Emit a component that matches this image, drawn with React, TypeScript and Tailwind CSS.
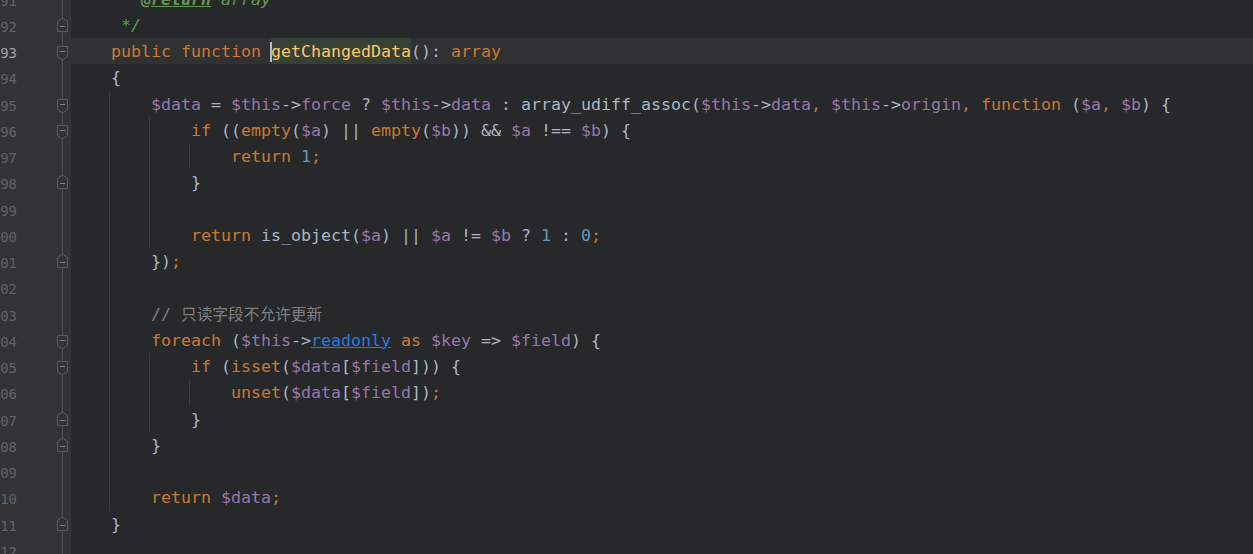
import React from "react";

const K = "text-[#cc7832]";
const V = "text-[#9876aa]";
const P = "text-[#a9b7c6]";
const N = "text-[#6897bb]";
const C = "text-[#808080]";
const D = "text-[#629755] italic";
const DT = "text-[#629755] italic font-bold underline decoration-[#629755]";
const L = "text-[#287bde] underline decoration-[#287bde]";
const CJK = "text-[#808080] text-[15.7px]";

type Tok = [string, string];
type Line = {
  n: number;
  toks: Tok[];
  guides?: number[];
  fold?: "s" | "e";
  current?: boolean;
};

const lines: Line[] = [
  { n: 91, toks: [[D, "     * "], [DT, "@return"], [D, " array"]] },
  { n: 92, toks: [[D, "     */"]], fold: "e" },
  {
    n: 93,
    current: true,
    fold: "s",
    toks: [[K, "    public function "], ["HL", "getChangedData"], [P, "(): "], [K, "array"]],
  },
  { n: 94, toks: [[P, "    {"]] },
  {
    n: 95,
    fold: "s",
    guides: [38],
    toks: [
      [P, "        "], [V, "$data"], [P, " = "], [V, "$this"], [P, "->"], [V, "force"], [P, " ? "],
      [V, "$this"], [P, "->"], [V, "data"], [P, " : array_udiff_assoc("], [V, "$this"], [P, "->"],
      [V, "data"], [K, ","], [P, " "], [V, "$this"], [P, "->"], [V, "origin"], [K, ","], [P, " "],
      [K, "function"], [P, " ("], [V, "$a"], [K, ","], [P, " "], [V, "$b"], [P, ") {"],
    ],
  },
  {
    n: 96,
    fold: "s",
    guides: [38, 78],
    toks: [
      [P, "            "], [K, "if"], [P, " (("], [K, "empty"], [P, "("], [V, "$a"], [P, ") || "],
      [K, "empty"], [P, "("], [V, "$b"], [P, ")) && "], [V, "$a"], [P, " !== "], [V, "$b"], [P, ") {"],
    ],
  },
  { n: 97, guides: [38, 78, 118], toks: [[P, "                "], [K, "return"], [P, " "], [N, "1"], [K, ";"]] },
  { n: 98, fold: "e", guides: [38, 78], toks: [[P, "            }"]] },
  { n: 99, guides: [38, 78], toks: [] },
  {
    n: 100,
    guides: [38, 78],
    toks: [
      [P, "            "], [K, "return"], [P, " is_object("], [V, "$a"], [P, ") || "], [V, "$a"],
      [P, " != "], [V, "$b"], [P, " ? "], [N, "1"], [P, " : "], [N, "0"], [K, ";"],
    ],
  },
  { n: 101, fold: "e", guides: [38], toks: [[P, "        })"], [K, ";"]] },
  { n: 102, guides: [38], toks: [] },
  { n: 103, guides: [38], toks: [[C, "        // "], [CJK, "只读字段不允许更新"]] },
  {
    n: 104,
    fold: "s",
    guides: [38],
    toks: [
      [P, "        "], [K, "foreach"], [P, " ("], [V, "$this"], [P, "->"], [L, "readonly"], [P, " "],
      [K, "as"], [P, " "], [V, "$key"], [P, " => "], [V, "$field"], [P, ") {"],
    ],
  },
  {
    n: 105,
    fold: "s",
    guides: [38, 78],
    toks: [
      [P, "            "], [K, "if"], [P, " ("], [K, "isset"], [P, "("], [V, "$data"], [P, "["],
      [V, "$field"], [P, "])) {"],
    ],
  },
  {
    n: 106,
    guides: [38, 78, 118],
    toks: [
      [P, "                "], [K, "unset"], [P, "("], [V, "$data"], [P, "["], [V, "$field"], [P, "])"], [K, ";"],
    ],
  },
  { n: 107, fold: "e", guides: [38, 78], toks: [[P, "            }"]] },
  { n: 108, fold: "e", guides: [38], toks: [[P, "        }"]] },
  { n: 109, guides: [38], toks: [] },
  { n: 110, guides: [38], toks: [[P, "        "], [K, "return"], [P, " "], [V, "$data"], [K, ";"]] },
  { n: 111, fold: "e", toks: [[P, "    }"]] },
  { n: 112, toks: [] },
];

function FoldStart() {
  return (
    <svg className="absolute left-[56px] top-[8px]" width="13" height="15" viewBox="0 0 13 15">
      <path d="M1.5 0.5 H11.5 V10.5 L6.5 14 L1.5 10.5 Z" fill="#313335" stroke="#595c5f" strokeWidth="1" />
      <path d="M4 5.5 H9" stroke="#7f8285" strokeWidth="1" />
    </svg>
  );
}

function FoldEnd() {
  return (
    <svg className="absolute left-[56px] top-[5px]" width="13" height="15" viewBox="0 0 13 15">
      <path d="M1.5 14.5 H11.5 V4.5 L6.5 1 L1.5 4.5 Z" fill="#313335" stroke="#595c5f" strokeWidth="1" />
      <path d="M4 9.5 H9" stroke="#7f8285" strokeWidth="1" />
    </svg>
  );
}

function Row({ line }: { line: Line }) {
  return (
    <div className="flex h-[26.25px] shrink-0">
      <div className="relative w-[71px] shrink-0 bg-[#313335]">
        <div
          className={`flex w-[17px] justify-end pt-[2px] text-[14px] leading-[26.25px] ${
            line.current ? "text-[#a4a3a3]" : "text-[#606366]"
          }`}
        >
          <span>{line.n}</span>
        </div>
        <div className="absolute left-[62px] top-0 h-full w-px bg-[#4c4f52]" />
        {line.fold === "s" && <FoldStart />}
        {line.fold === "e" && <FoldEnd />}
      </div>
      <div
        className={`relative flex-1 whitespace-pre pt-[1px] text-[16.61px] leading-[26.25px] ${
          line.current ? "bg-[#303133]" : ""
        }`}
      >
        {(line.guides || []).map((g) => (
          <div
            key={g}
            className="absolute top-0 h-full w-px bg-[#3a3c3e]"
            style={{ left: g }}
          />
        ))}
        <span className="relative">
          {line.toks.map(([cls, text], i) =>
            cls === "HL" ? (
              <span key={i} className="relative inline-block h-[26.25px] mt-[-1px] bg-[#344134] align-top pt-[1px] text-[#ffc66d]">
                <span className="absolute left-[-1px] top-[4px] h-[20px] w-[2px] bg-[#bbbbbb]" />
                {text}
              </span>
            ) : (
              <span key={i} className={cls}>
                {text}
              </span>
            )
          )}
        </span>
      </div>
    </div>
  );
}

export default function App() {
  return (
    <div
      className="h-[554px] w-[1253px] overflow-hidden bg-[#262829]"
      style={{ fontFamily: '"DejaVu Sans Mono", "Noto Sans CJK SC", monospace' }}
    >
      <div className="mt-[-14.5px] flex flex-col">
        {lines.map((l) => (
          <Row key={l.n} line={l} />
        ))}
      </div>
    </div>
  );
}
